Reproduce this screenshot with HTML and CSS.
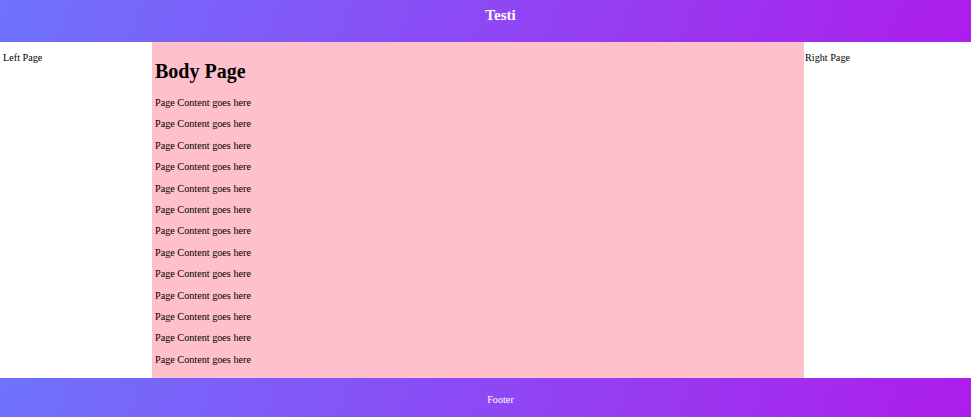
FILE: index.html
```html
<!DOCTYPE html>
<html>
<head>
<meta charset="utf-8">
<link rel="stylesheet" href="styles.css">
</head>
<body>
<div class="page">
  <header class="top">Testi</header>
  <main class="cols">
    <aside class="left"><p>Left Page</p></aside>
    <section class="center">
      <h1>Body Page</h1>
      <p>Page Content goes here</p>
      <p>Page Content goes here</p>
      <p>Page Content goes here</p>
      <p>Page Content goes here</p>
      <p>Page Content goes here</p>
      <p>Page Content goes here</p>
      <p>Page Content goes here</p>
      <p>Page Content goes here</p>
      <p>Page Content goes here</p>
      <p>Page Content goes here</p>
      <p>Page Content goes here</p>
      <p>Page Content goes here</p>
      <p>Page Content goes here</p>
    </section>
    <aside class="right"><p>Right Page</p></aside>
  </main>
  <footer class="bottom">Footer</footer>
</div>
</body>
</html>
```
FILE: styles.css
```css
html, body {
  margin: 0;
  padding: 0;
  background: #fff;
  font-family: "Liberation Serif", "Times New Roman", serif;
  color: #000;
}
.page {
  display: flex;
  flex-direction: column;
}
.top {
  height: 42px;
  box-sizing: border-box;
  padding: 7px 0 0 30px;
  text-align: center;
  font-size: 15px;
  font-weight: bold;
  color: #fff;
  background: linear-gradient(110deg, #6e73fd 0%, #ad1deb 100%);
}
.cols {
  display: grid;
  grid-template-columns: 152px 652px 1fr;
}
.cols p {
  font-size: 10.2px;
  line-height: 11.4px;
  margin: 10px 0;
}
.left {
  padding: 0 3px;
}
.right {
  padding: 0 0 0 1px;
}
.center {
  background: #ffc0cb;
  padding: 3px 3px;
}
.center h1 {
  font-size: 20px;
  margin: 15px 0 14px;
}
.bottom {
  height: 39px;
  box-sizing: border-box;
  padding: 16px 0 0 30px;
  text-align: center;
  font-size: 10.2px;
  color: #fff;
  background: linear-gradient(110deg, #6e73fd 0%, #ad1deb 100%);
}
```
